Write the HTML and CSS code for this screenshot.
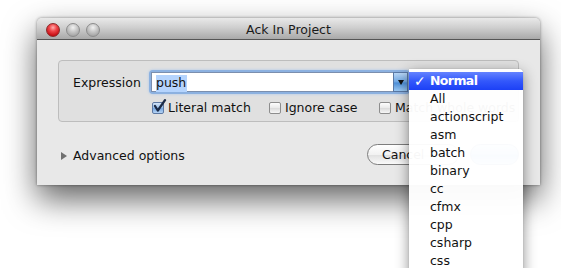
FILE: index.html
```html
<!DOCTYPE html>
<html>
<head>
<meta charset="utf-8">
<link rel="stylesheet" href="styles.css">
</head>
<body>
<div class="window">
  <div class="titlebar">
    <div class="lights">
      <span class="light red"></span>
      <span class="light gray"></span>
      <span class="light gray"></span>
    </div>
    <div class="title">Ack In Project</div>
  </div>
  <div class="content">
    <div class="group">
      <div class="expr-row">
        <span class="label">Expression</span>
        <div class="combo">
          <div class="field"><span class="sel">push</span></div>
          <div class="arrow"><span class="tri"></span></div>
        </div>
      </div>
      <div class="checks">
        <label class="check w1">
          <span class="box checked">
            <svg width="15" height="15" viewBox="0 0 15 15"><path d="M3 7 L5.8 11.5 L13 1.2" fill="none" stroke="#1b2a45" stroke-width="2.3" stroke-linecap="round" stroke-linejoin="round"/></svg>
          </span>Literal match</label>
        <label class="check w2"><span class="box"></span>Ignore case</label>
        <label class="check"><span class="box"></span>Match whole words</label>
      </div>
    </div>
    <div class="footer">
      <div class="disclosure"><span class="dtri"></span>Advanced options</div>
      <div class="buttons">
        <div class="btn">Cancel</div>
        <div class="btn default"></div>
      </div>
    </div>
  </div>
</div>
<div class="menu">
  <div class="item hl"><span class="tick">✓</span>Normal</div>
  <div class="item">All</div>
  <div class="item">actionscript</div>
  <div class="item">asm</div>
  <div class="item">batch</div>
  <div class="item">binary</div>
  <div class="item">cc</div>
  <div class="item">cfmx</div>
  <div class="item">cpp</div>
  <div class="item">csharp</div>
  <div class="item">css</div>
</div>
</body>
</html>
```
FILE: styles.css
```css
html, body {
  margin: 0;
  padding: 0;
  background: #ffffff;
  overflow: hidden;
}
body {
  width: 561px;
  height: 268px;
  font-family: "DejaVu Sans", "Liberation Sans", sans-serif;
  font-size: 12.5px;
  color: #111;
  padding: 18px 0 0 37px;
  box-sizing: border-box;
}
.window {
  width: 503px;
  height: 167px;
  border-radius: 5px 5px 0 0;
  background: #e8e8e8;
  box-shadow: 0 14px 32px rgba(0,0,0,0.62), 0 0 3px rgba(0,0,0,0.45);
  display: flex;
  flex-direction: column;
}
.titlebar {
  height: 21px;
  border-radius: 5px 5px 0 0;
  background: linear-gradient(#e9e9e9, #cfcfcf 45%, #a9a9a9);
  border-bottom: 1px solid #555;
  position: relative;
  display: flex;
  align-items: center;
  justify-content: center;
}
.lights {
  position: absolute;
  left: 9px;
  top: 5px;
  display: flex;
  gap: 6px;
}
.light {
  width: 14px;
  height: 14px;
  border-radius: 50%;
  box-sizing: border-box;
}
.light.red {
  background: radial-gradient(circle at 50% 30%, #ffb0b0 0, #f0484c 35%, #c81016 75%, #a00 100%);
  border: 1px solid #8a2a2a;
}
.light.gray {
  background: radial-gradient(circle at 50% 30%, #f2f2f2 0, #c9c9c9 40%, #a5a5a5 80%, #999 100%);
  border: 1px solid #8c8c8c;
}
.title {
  font-size: 12.5px;
  color: #1a1a1a;
  margin-top: 1px;
}
.content {
  flex: 1;
  padding: 20px 21px 0 21px;
  display: flex;
  flex-direction: column;
}
.group {
  height: 62px;
  box-sizing: border-box;
  border: 1px solid #bdbdbd;
  border-radius: 4px;
  background: #e0e0e0;
  padding: 11px 0 0 14px;
}
.expr-row {
  display: flex;
  align-items: center;
  height: 20px;
}
.label {
  width: 78px;
  color: #111;
}
.combo {
  display: flex;
  height: 20px;
  border-radius: 2px;
  box-shadow: 0 0 0 2px #8cb1e0, 0 0 3px 2px #a9c6ec;
}
.field {
  width: 242px;
  height: 20px;
  box-sizing: border-box;
  background: #fff;
  border: 1px solid #7b8fae;
  border-right: none;
  padding: 1px 0 0 4px;
  line-height: 17px;
}
.sel {
  background: #b5d4fd;
  padding: 0 1px 1px 0;
  display: inline-block;
  line-height: 16px;
}
.arrow {
  width: 15px;
  height: 20px;
  box-sizing: border-box;
  background: linear-gradient(#b8d6f6, #6fa7e3 50%, #4d8fd8 55%, #9ccaf5);
  border: 1px solid #5a78a4;
  display: flex;
  align-items: center;
  justify-content: center;
}
.tri {
  width: 0;
  height: 0;
  border-left: 3.5px solid transparent;
  border-right: 3.5px solid transparent;
  border-top: 5px solid #111;
}
.checks {
  display: flex;
  align-items: center;
  margin-top: 9px;
  padding-left: 79px;
  height: 12px;
}
.check {
  display: flex;
  align-items: center;
  gap: 4px;
  white-space: nowrap;
  padding-top: 1px;
}
.check.w1 { width: 117px; }
.check.w2 { width: 110px; }
.box {
  width: 12px;
  height: 12px;
  box-sizing: border-box;
  border: 1px solid #8d8d8d;
  border-radius: 2px;
  background: linear-gradient(#fdfdfd, #e9e9e9 50%, #dcdcdc 55%, #f6f6f6);
  position: relative;
  flex: none;
}
.box.checked {
  background: linear-gradient(#d4e4f7, #96bde9 50%, #78a8e2 55%, #b6d4f4);
  border-color: #5d79a3;
}
.box svg {
  position: absolute;
  left: -1px;
  top: -4px;
}
.footer {
  display: flex;
  align-items: center;
  justify-content: space-between;
  margin-top: 22px;
  height: 21px;
  padding-left: 3px;
}
.disclosure {
  display: flex;
  align-items: center;
  gap: 6px;
  padding-top: 2px;
}
.dtri {
  width: 0;
  height: 0;
  border-top: 4px solid transparent;
  border-bottom: 4px solid transparent;
  border-left: 6px solid #707070;
}
.buttons {
  display: flex;
  gap: 11px;
}
.btn {
  height: 21px;
  box-sizing: border-box;
  border: 1px solid #7d7d7d;
  border-radius: 11px;
  background: linear-gradient(#ffffff, #f2f2f2 50%, #e2e2e2 55%, #fafafa);
  width: 92px;
  padding-left: 14px;
  line-height: 19px;
}
.btn.default {
  width: 49px;
  background: linear-gradient(#c5ddf8, #7eb1ea 50%, #5b9be4 55%, #aed4fb);
  border-color: #5a7fb0;
}
.menu {
  position: absolute;
  left: 409px;
  top: 69px;
  width: 114px;
  height: 210px;
  padding-top: 3px;
  box-sizing: border-box;
  background: rgba(255,255,255,0.965);
  border-radius: 0 4px 0 0;
  box-shadow: 0 4px 14px rgba(0,0,0,0.45), 0 0 1px rgba(0,0,0,0.35);
}
.item {
  height: 18px;
  line-height: 18px;
  padding-left: 21px;
  position: relative;
  color: #111;
}
.item.hl {
  background: linear-gradient(#6483ff, #3358fb 50%, #1c40f6);
  color: #fff;
  font-weight: bold;
  letter-spacing: -0.6px;
}
.tick {
  position: absolute;
  left: 5px;
  top: 0;
  font-size: 14px;
  font-weight: bold;
}
```
